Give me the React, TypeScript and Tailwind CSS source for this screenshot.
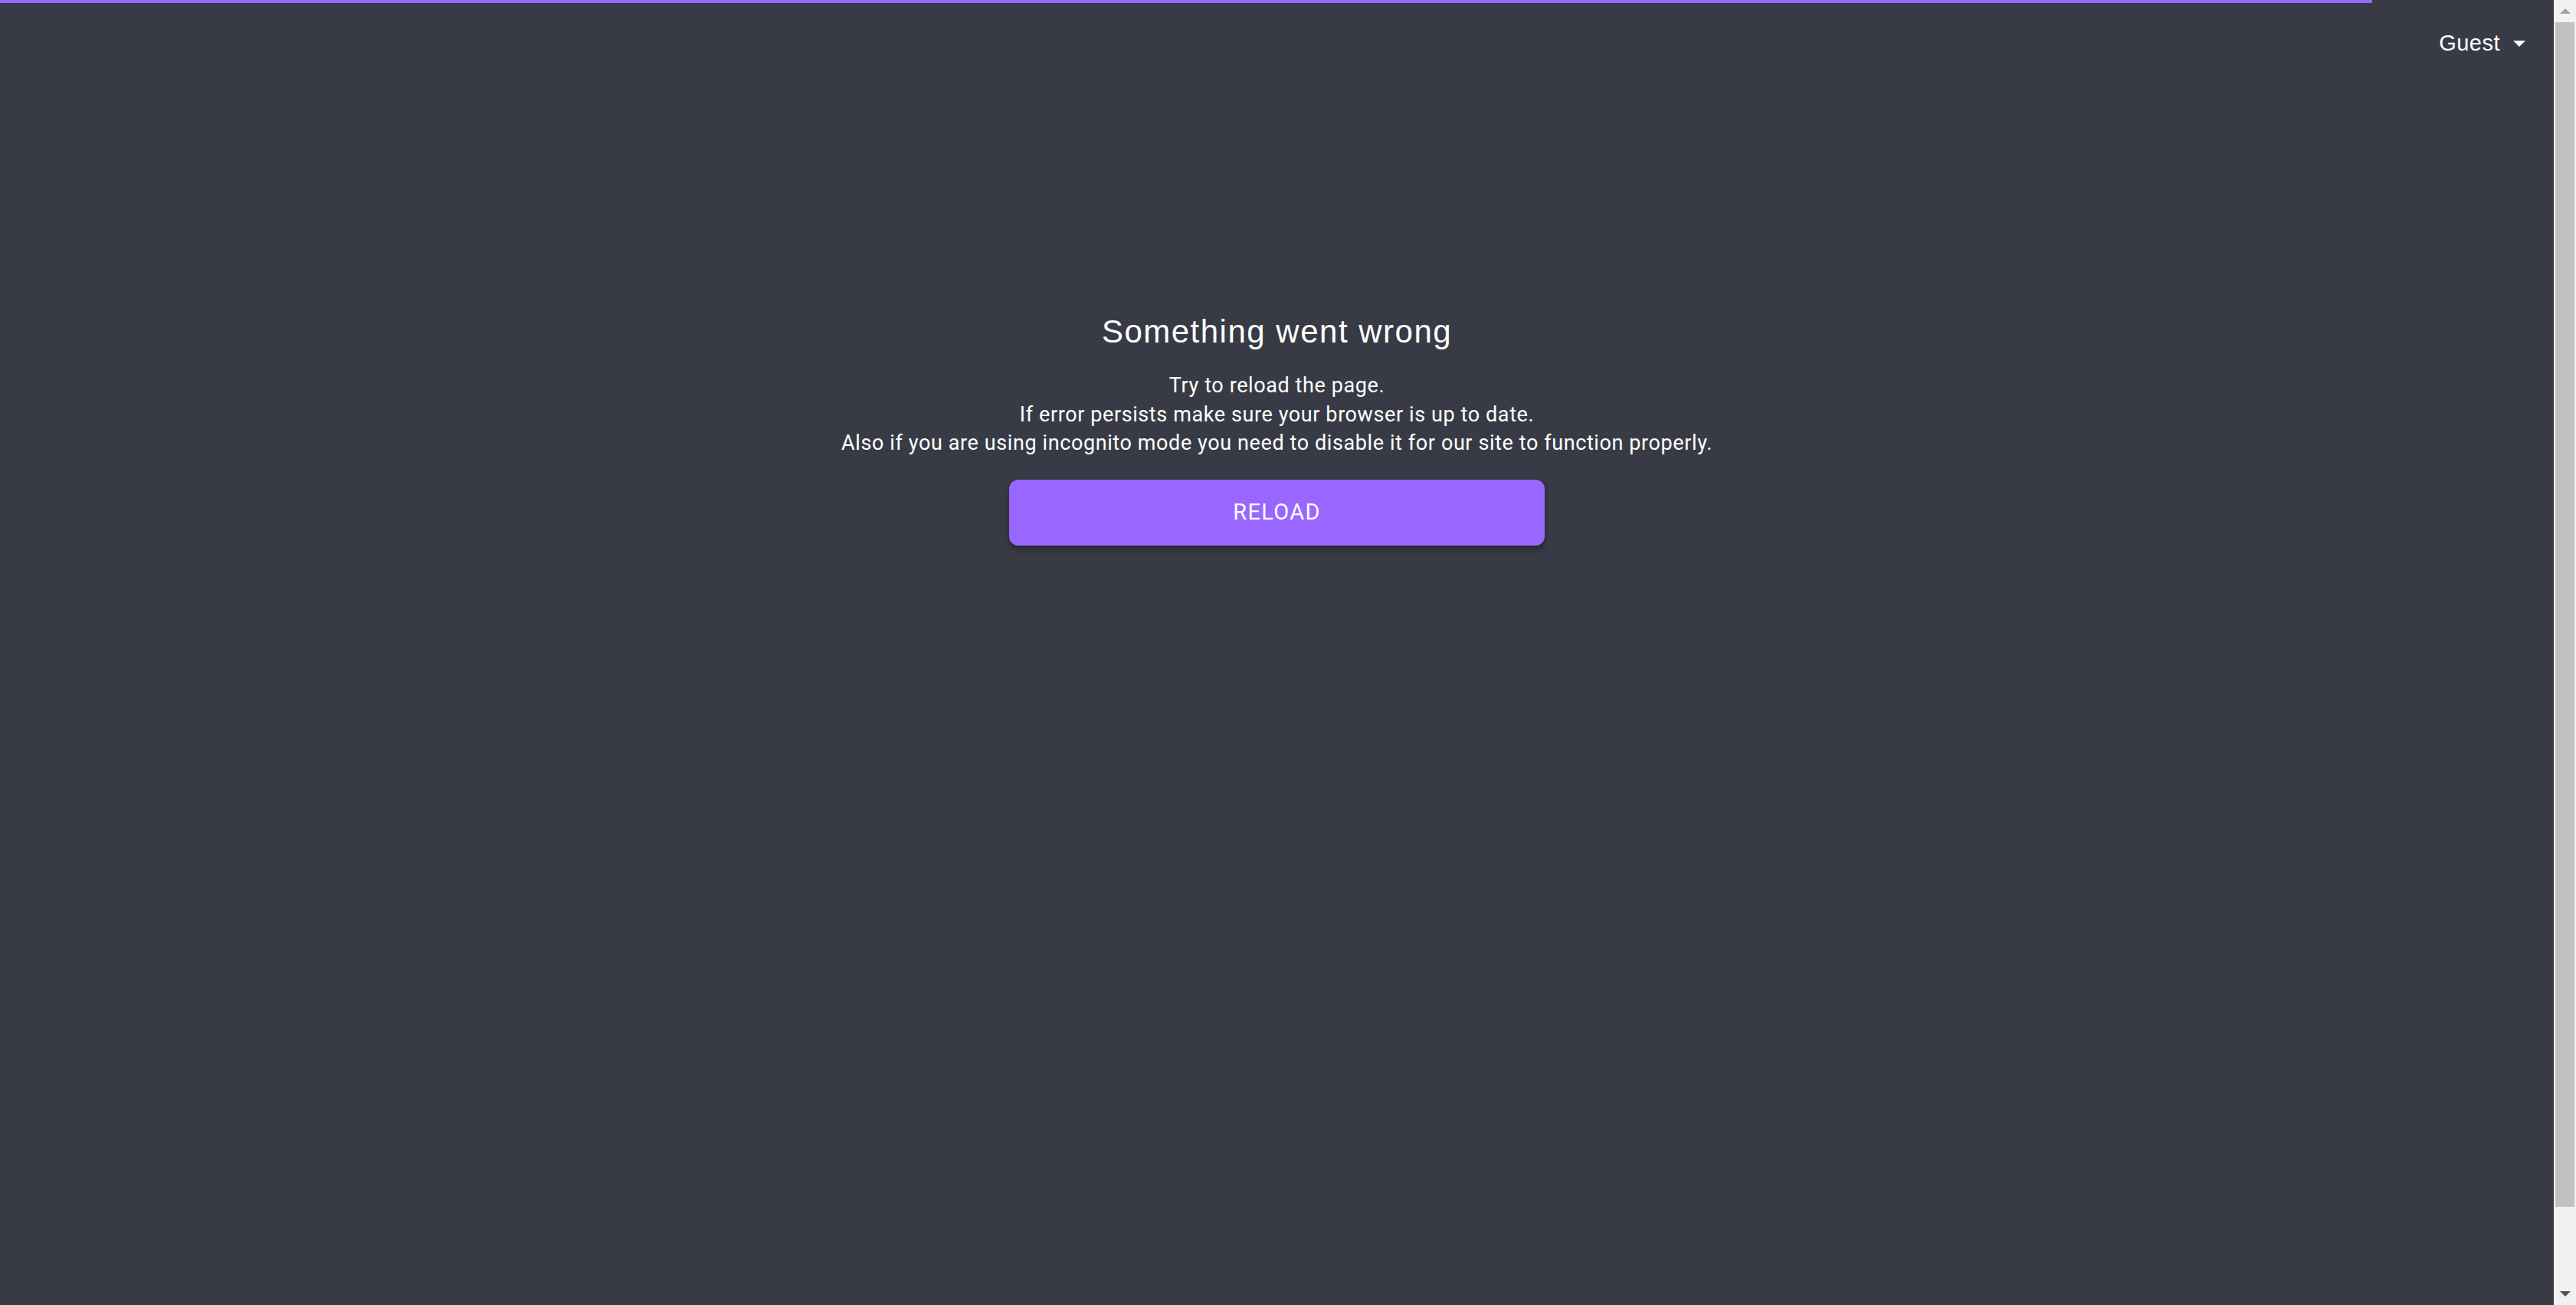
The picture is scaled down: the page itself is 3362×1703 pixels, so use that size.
import React from 'react'

function Caret({ className }: { className?: string }) {
  return (
    <svg viewBox="0 0 10 5" className={className} fill="currentColor">
      <path d="M0 0h10L5 5z" />
    </svg>
  )
}

function Scrollbar() {
  return (
    <div className="flex h-full w-[29px] flex-none flex-col bg-[#f1f1f1]">
      <div className="flex h-[29px] items-center justify-center text-[#a3a3a3]">
        <Caret className="h-[7px] w-[14px] rotate-180" />
      </div>
      <div className="mx-[2px] h-[1546px] bg-[#c1c1c1]" />
      <div className="mt-auto flex h-[29px] items-center justify-center text-[#505050]">
        <Caret className="h-[7px] w-[14px]" />
      </div>
    </div>
  )
}

export default function App() {
  return (
    <div className="flex h-screen w-full overflow-hidden bg-[#383b45]">
      <main className="relative flex flex-1 flex-col">
        {/* loading bar */}
        <div className="absolute left-0 top-0 h-[4px] w-[3096px] bg-[#9966ff]" />

        <header className="flex h-[114px] items-center justify-end pr-[37px]">
          <button className="flex items-center gap-[17px] font-['Liberation_Sans',Arial,sans-serif] text-[29px] tracking-[0.5px] text-white">
            <span>Guest</span>
            <Caret className="h-[8px] w-[16px]" />
          </button>
        </header>

        <section className="mt-[294px] flex flex-col items-center text-center text-white">
          <h1 className="font-['Liberation_Sans',Arial,sans-serif] text-[42px] leading-[50px] tracking-[1.5px]">
            Something went wrong
          </h1>
          <div className="mt-[27px] font-['Roboto',sans-serif] text-[27px] leading-[37.5px] tracking-[0.6px]">
            <p>Try to reload the page.</p>
            <p>If error persists make sure your browser is up to date.</p>
            <p>Also if you are using incognito mode you need to disable it for our site to function properly.</p>
          </div>
          <button className="mt-[28px] flex h-[86px] w-[699px] items-center justify-center rounded-[12px] bg-[#9966ff] font-['Roboto',sans-serif] text-[29px] tracking-[1.3px] text-white shadow-[0_6px_10px_rgba(0,0,0,0.25),0_2px_4px_rgba(0,0,0,0.2)]">
            RELOAD
          </button>
        </section>
      </main>
      <Scrollbar />
    </div>
  )
}
